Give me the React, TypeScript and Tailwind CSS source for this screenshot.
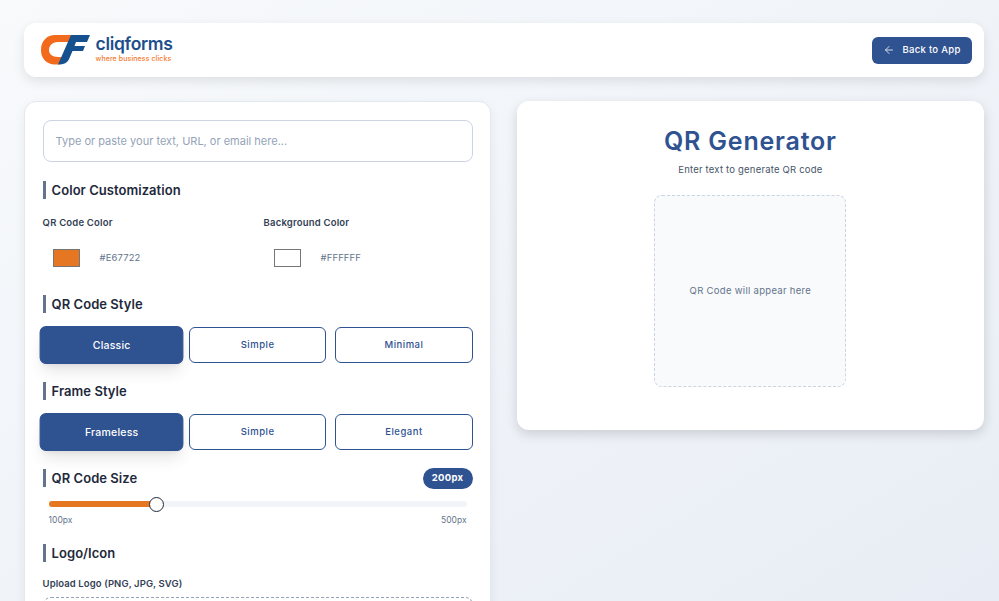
import { ArrowLeft } from "lucide-react"

function Logo() {
  return (
    <div className="flex items-center gap-[5.5px]">
      <svg width="49" height="30" viewBox="0 0 49 30">
        <path d="M14 0 H33 L29 7 H17 C11 7 8 11 8 15 C8 19 11 22 17 22 H21 L18 29.5 H14 C5 29.5 0 23 0 15 C0 6 6 0 14 0 Z" fill="#f26a1b" />
        <path d="M30 0 H49 L46 7 H35 L33.5 11 H44 L42 16 H31.5 L28.5 23 C26.5 28 23 29.5 17 29.5 Z" fill="#15508f" />
      </svg>
      <div className="flex flex-col pb-[2px]">
        <span className="text-[17.5px] leading-[18px] font-semibold text-[#1d4f8c] tracking-[-0.3px]">cliqforms</span>
        <span className="mt-[2px] text-[7px] leading-[8px] font-medium text-[#f47a2c] tracking-[0.1px]">where business clicks</span>
      </div>
    </div>
  )
}

function SectionTitle({ children }: { children: React.ReactNode }) {
  return (
    <h3 className="border-l-[3px] border-[#64748b] pl-[6px] text-[13px] leading-[18px] font-semibold text-[#1e293b] tracking-[0.05px]">
      {children}
    </h3>
  )
}

function OptionRow({ options }: { options: string[] }) {
  return (
    <div className="grid grid-cols-3 gap-[9px]">
      {options.map((option, index) => (
        <button
          key={index}
          className={
            index === 0
              ? "h-9 rounded-md border border-[#2f5291] bg-[#2f5291] text-[10px] font-medium tracking-[0.2px] text-white scale-105 shadow-lg"
              : "h-9 rounded-md border border-[#2f5291] bg-white text-[9.5px] font-medium tracking-[0.5px] text-[#2f5291]"
          }
        >
          {option}
        </button>
      ))}
    </div>
  )
}

function ColorField({ label, color, hex }: { label: string; color: string; hex: string }) {
  return (
    <div>
      <p className="text-[9.5px] leading-[12px] font-semibold text-[#334155] tracking-[0.2px]">{label}</p>
      <div className="mt-[20px] flex items-center pl-[10px]">
        <div className={`h-[18px] w-[27px] border border-[#767676] ${color}`} />
        <span className="ml-[20px] text-[9.5px] text-[#64748b] tracking-[0.1px]">{hex}</span>
      </div>
    </div>
  )
}

export default function App() {
  return (
    <div className="h-[601px] overflow-hidden bg-gradient-to-br from-[#f8fafc] to-[#e8edf5] pl-6 pr-[15px] pt-[23px] font-['Inter',sans-serif]">
      <header className="flex h-[54px] items-center justify-between rounded-xl bg-white pl-[17px] pr-3 shadow-[0_4px_12px_rgba(0,0,0,0.1)]">
        <Logo />
        <button className="flex h-[27px] w-[100px] items-center justify-center gap-[7px] rounded-md bg-[#2f5291] text-[9.5px] font-medium tracking-[0.3px] text-white">
          <ArrowLeft size={12} className="opacity-80" />
          Back to App
        </button>
      </header>

      <div className="mt-6 grid grid-cols-2 items-start gap-[25.6px]">
        <div className="rounded-xl border border-[#e2e8f0] bg-white px-[17.6px] pt-[18px] shadow-[0_4px_12px_rgba(0,0,0,0.06)]">
          <div className="flex h-[42px] items-center rounded-lg border border-[#cbd5e1] px-3 text-[11px] text-[#94a3b8]">
            Type or paste your text, URL, or email here...
          </div>

          <div className="mt-[19px]"><SectionTitle>Color Customization</SectionTitle></div>
          <div className="mt-[18px] grid grid-cols-2 gap-3">
            <ColorField label="QR Code Color" color="bg-[#e67722]" hex="#E67722" />
            <ColorField label="Background Color" color="bg-white" hex="#FFFFFF" />
          </div>

          <div className="mt-[28px]"><SectionTitle>QR Code Style</SectionTitle></div>
          <div className="mt-[14px]"><OptionRow options={["Classic", "Simple", "Minimal"]} /></div>

          <div className="mt-[19px]"><SectionTitle>Frame Style</SectionTitle></div>
          <div className="mt-[14px]"><OptionRow options={["Frameless", "Simple", "Elegant"]} /></div>

          <div className="mt-[18px] flex items-center justify-between">
            <div className="-mt-px"><SectionTitle>QR Code Size</SectionTitle></div>
            <span className="flex h-[21px] w-[50px] items-center justify-center rounded-full bg-[#2f5291] text-[9.5px] font-bold tracking-[0.3px] text-white">200px</span>
          </div>
          <div className="mt-[12px] px-[6px]">
            <div className="relative h-[6px] rounded-full bg-[#f1f5f9]">
              <div className="h-[6px] w-[108px] rounded-full bg-[#e67722]" />
              <div className="absolute left-[100px] top-[-4.5px] h-[15px] w-[15px] rounded-full border-[1.5px] border-[#1e293b] bg-white" />
            </div>
            <div className="mt-[8px] flex justify-between text-[8.5px] leading-[11px] text-[#64748b]">
              <span>100px</span>
              <span>500px</span>
            </div>
          </div>

          <div className="mt-[18px]"><SectionTitle>Logo/Icon</SectionTitle></div>
          <p className="mt-[16px] text-[9.5px] leading-[12px] font-semibold text-[#334155] tracking-[0.1px]">Upload Logo (PNG, JPG, SVG)</p>
          <div className="mt-[7px] h-[80px] rounded-lg border border-dashed border-[#94a3b8]" />
        </div>

        <div className="flex h-[329px] flex-col items-center rounded-xl bg-white pt-[22px] shadow-[0_4px_12px_rgba(0,0,0,0.15)]">
          <h1 className="text-[25px] leading-[36px] font-semibold tracking-[0.8px] text-[#2f5291]">QR Generator</h1>
          <p className="mt-[4px] text-[9.5px] leading-[14px] text-[#475569] tracking-[0.2px]">Enter text to generate QR code</p>
          <div className="mt-[18px] flex h-[192px] w-[192px] items-center justify-center rounded-lg border border-dashed border-[#cbd5e1] bg-[#f8fafc] text-[9.5px] text-[#64748b] tracking-[0.3px]">
            QR Code will appear here
          </div>
        </div>
      </div>
    </div>
  )
}
